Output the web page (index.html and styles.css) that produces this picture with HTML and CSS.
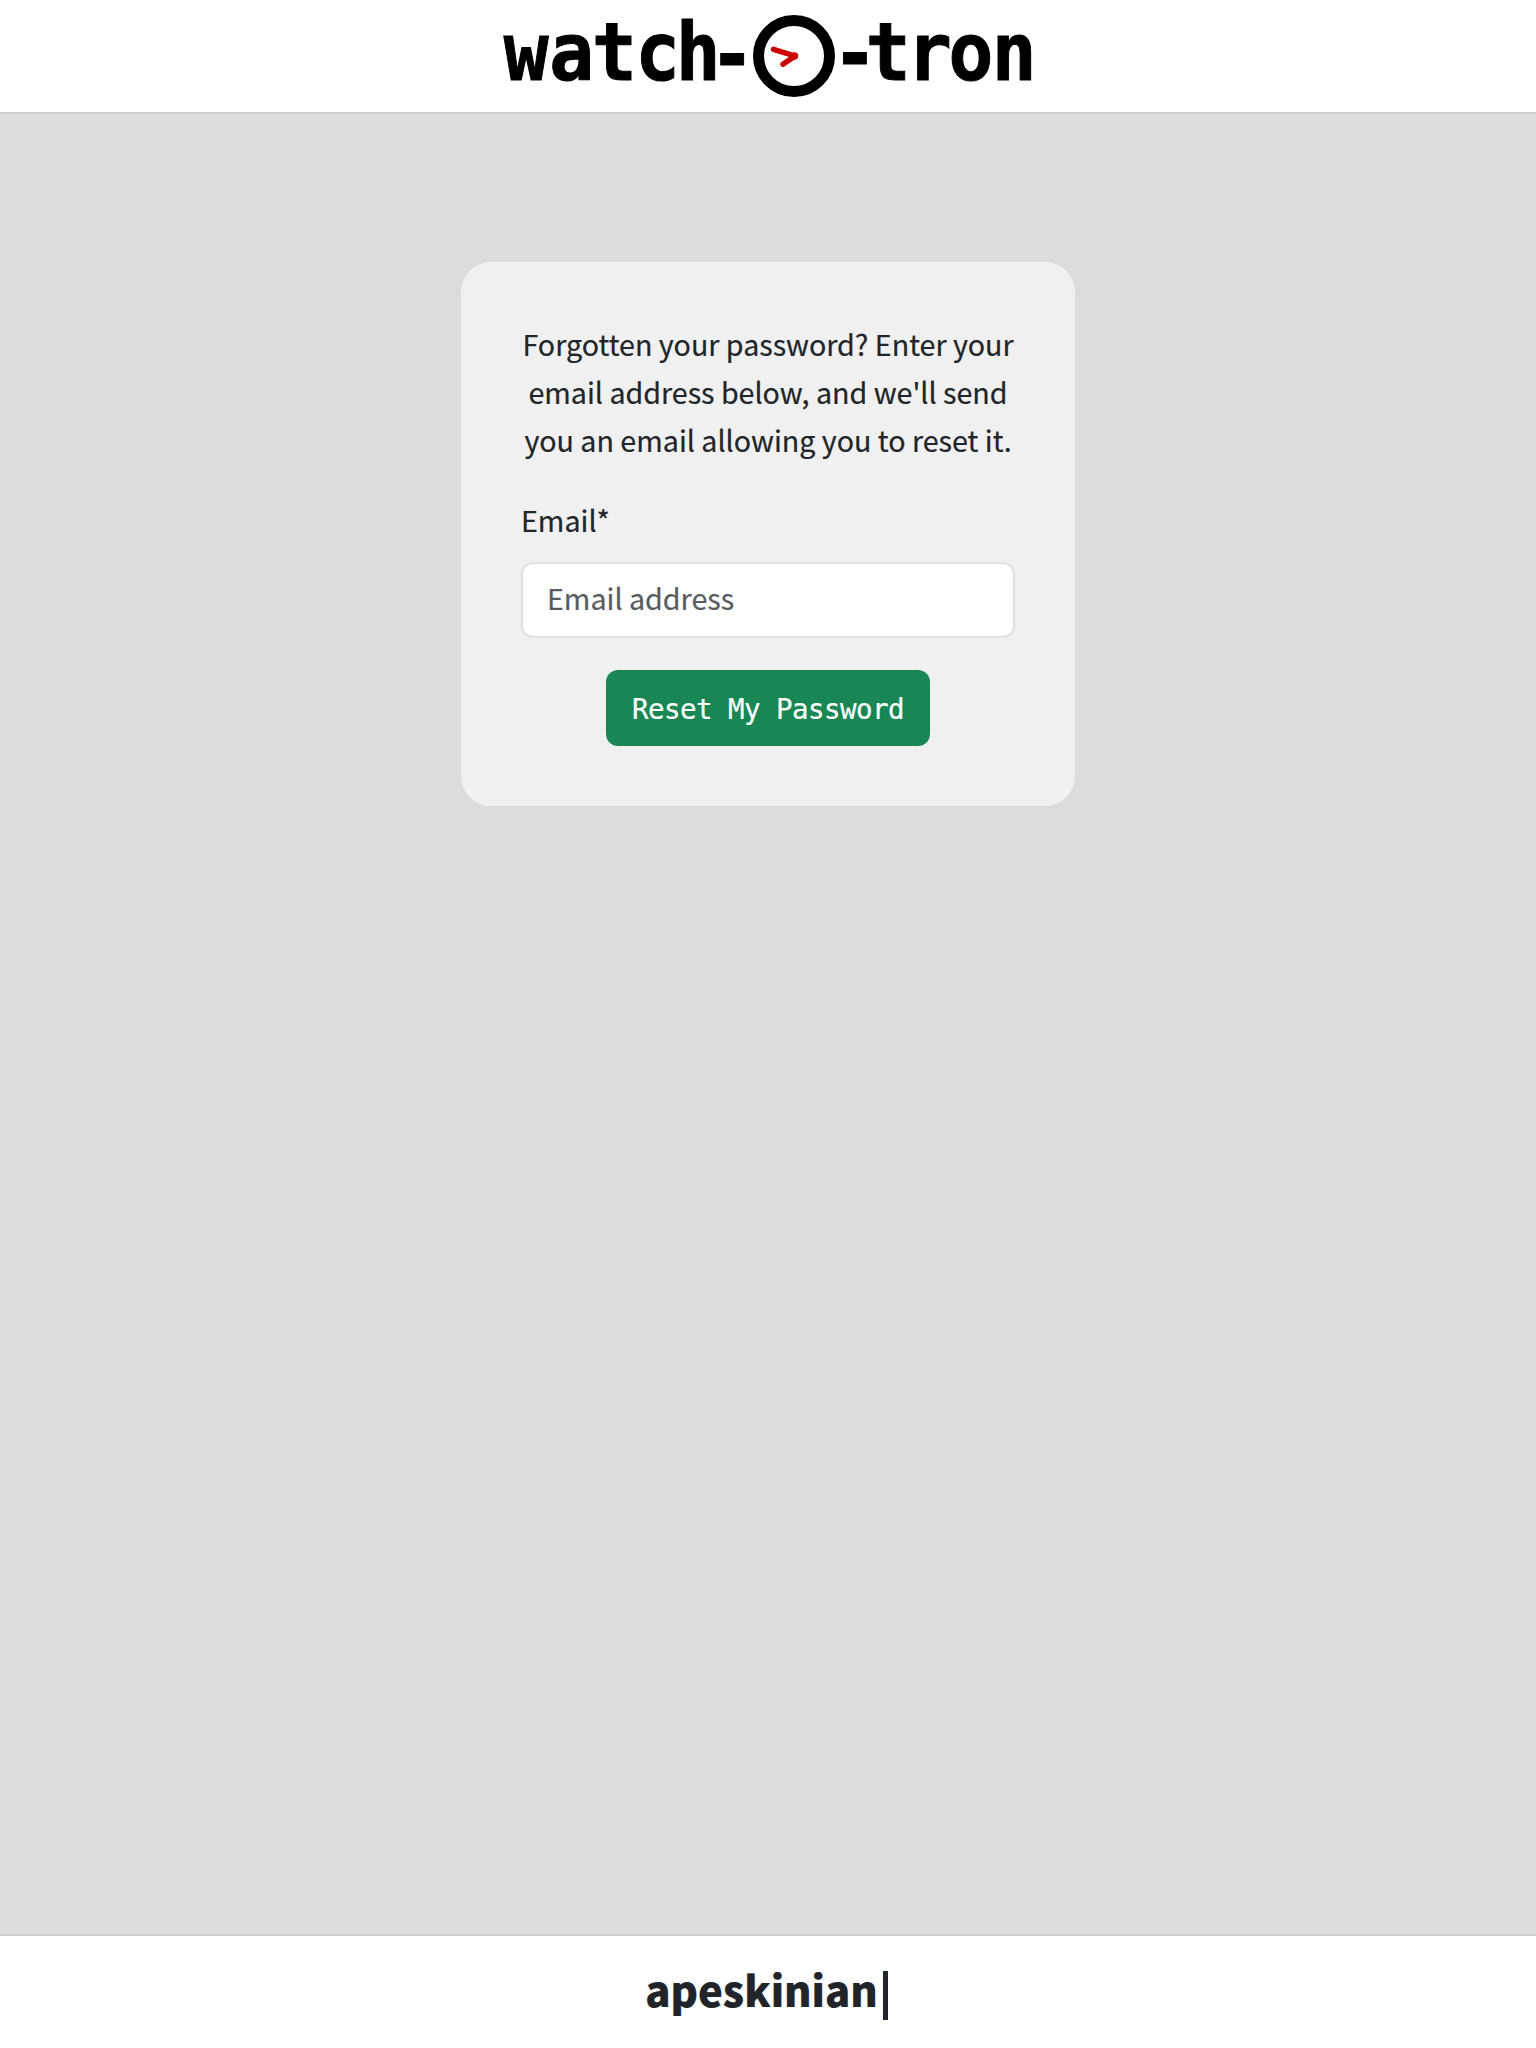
FILE: index.html
```html
<!DOCTYPE html>
<html lang="en">
<head>
<meta charset="utf-8">
<title>watch-O-tron</title>
<link rel="stylesheet" href="styles.css">
</head>
<body>
<header class="site-header">
<svg class="logo" width="536" height="112" viewBox="500 0 536 112" role="img" aria-label="watch-O-tron">
<g class="logo-text" transform="scale(.92 1)">
<text y="80.5 80.5 80.5 80.5 80.5 82" x="547.5 597 643.5 690.5 734.5 771.5">watch-</text>
<text y="81.5 80 80 80 80" x="905 941 986 1031 1078">-tron</text>
</g>
<circle cx="794" cy="56" r="35.5" fill="none" stroke="#000" stroke-width="11"/>
<path d="M773.5 49.3 795 56 783 64.2" fill="none" stroke="#c00" stroke-width="5.4" stroke-linecap="round" stroke-linejoin="round"/>
<circle cx="794.5" cy="56" r="3.7" fill="#c00"/>
</svg>
</header>
<main class="content">
<form class="card">
<p class="intro">Forgotten your password? Enter your<br>email address below, and we'll send<br>you an email allowing you to reset it.</p>
<label class="label" for="email">Email*</label>
<input class="input" id="email" type="email" placeholder="Email address">
<button class="button" type="button">Reset My Password</button>
</form>
</main>
<footer class="site-footer"><span class="author">apeskinian</span><span class="cursor"></span></footer>
</body>
</html>
```
FILE: styles.css
```css
* { box-sizing: border-box; }
body {
  margin: 0;
  min-height: 2048px;
  display: flex;
  flex-direction: column;
  background: #dcdcdc;
  color: #212529;
  font: 28.65px/48px "Noto Sans CJK SC", sans-serif;
  -webkit-text-stroke: .2px;
}
.site-header {
  height: 114px;
  display: flex;
  justify-content: center;
  background: #fff;
  border-bottom: 2px solid #d0d0d0;
}
.logo { display: block; }
.logo-text { font: bold 81px "DejaVu Sans Mono", monospace; fill: #000; stroke: #000; stroke-width: 1px; }
.content { flex: 1; display: flex; justify-content: center; align-items: flex-start; padding-top: 148px; }
.card {
  width: 614px;
  height: 544px;
  padding: 58px 60px 60px;
  display: flex;
  flex-direction: column;
  background: #f0f0f0;
  border-radius: 30px;
}
.intro { margin: 0 0 32px; text-align: center; white-space: nowrap; }
.label { margin-bottom: 18px; }
.input {
  width: 100%;
  height: 76px;
  margin-bottom: 32px;
  padding: 9px 24px 15px;
  border: 2px solid #dee2e6;
  border-radius: 12px;
  background: #fff;
  font: inherit;
}
.input::placeholder { color: #595c5f; opacity: 1; }
.button {
  align-self: center;
  width: 324px;
  height: 76px;
  padding: 2px 0 0;
  border: 0;
  border-radius: 12px;
  background: #198754;
  color: #fff;
  font: 27.5px/48px "DejaVu Sans Mono", monospace;
  letter-spacing: -.56px;
  white-space: nowrap;
}
.site-footer {
  height: 114px;
  display: flex;
  justify-content: center;
  align-items: center;
  background: #fff;
  border-top: 2px solid #d0d0d0;
}
.author { padding-bottom: 7px; font-size: 41.8px; font-weight: 900; }
.cursor { width: 5px; height: 49px; margin: 6px 3px 0 5px; background: #212529; }
```
